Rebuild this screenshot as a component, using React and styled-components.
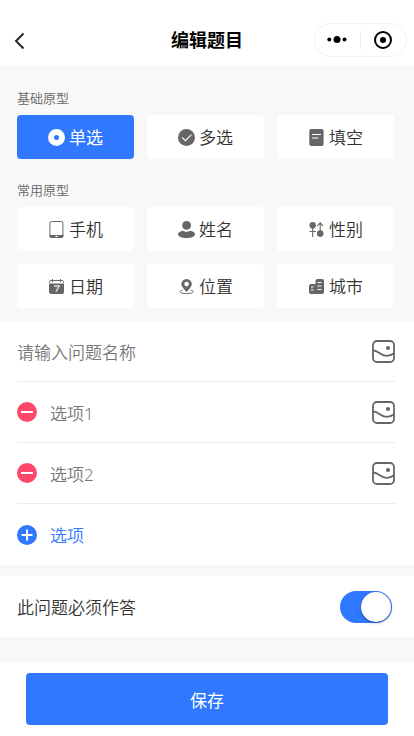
import React, { useState } from 'react'
import styled, { createGlobalStyle } from 'styled-components'

const GlobalStyle = createGlobalStyle`
  * {
    box-sizing: border-box;
  }

  body {
    margin: 0;
    background: #f8f8f8;
    font-family: 'Noto Sans', 'Noto Sans CJK SC', sans-serif;
    font-weight: 350;
    color: #333;
  }

  button {
    border: 0;
    padding: 0;
    margin: 0;
    background: none;
    font-family: inherit;
    font-weight: inherit;
    cursor: pointer;
  }

  svg {
    display: block;
    flex-shrink: 0;
  }
`

const Page = styled.div`
  width: 100%;
  height: 736px;
  display: flex;
  flex-direction: column;
  overflow: hidden;
`

const Header = styled.header`
  height: 66px;
  flex-shrink: 0;
  padding: 14px 7px 0 12px;
  background: #fff;
  display: grid;
  grid-template-columns: 88px 1fr 93px;
  align-items: center;
`

const BackButton = styled.button`
  padding-top: 2px;
`

const PageTitle = styled.h1`
  margin: 0 0 1px;
  font-size: 18px;
  line-height: 26px;
  font-weight: 700;
  text-align: center;
  color: #000;
`

const Capsule = styled.div`
  height: 34px;
  border: 1px solid #f0f0f0;
  border-radius: 17px;
  display: flex;
  align-items: center;
`

const CapsuleButton = styled.button`
  flex: 1;
  padding-right: 2px;
  display: flex;
  justify-content: center;

  & + & {
    border-left: 1px solid #f0f0f0;
  }
`

const Types = styled.section`
  flex-shrink: 0;
  height: 255px;
  padding: 22px 20px 0 17px;
`

const TypeLabel = styled.h2`
  margin: 0;
  height: 20px;
  font-size: 13px;
  line-height: 20px;
  font-weight: 350;
  color: #666;
`

const TypeGrid = styled.div`
  display: grid;
  grid-template-columns: repeat(3, 117px);
  gap: 13px;
  margin: 7px 0 21px;
`

const TypeButton = styled.button`
  height: 44px;
  border-radius: 4px;
  display: flex;
  align-items: center;
  justify-content: center;
  gap: 4px;
  font-size: 17px;
  line-height: 24px;
  color: ${(props) => (props.$active ? '#fff' : '#333')};
  font-weight: ${(props) => (props.$active ? 400 : 350)};
  background: ${(props) => (props.$active ? '#3078ff' : '#fff')};

  svg {
    color: ${(props) => (props.$active ? '#fff' : '#666')};
  }

  span {
    padding-top: 2px;
  }
`

const Panel = styled.section`
  flex-shrink: 0;
  padding: 0 19px 0 17px;
  background: #fff;
`

const Row = styled.div`
  height: 61px;
  display: flex;
  align-items: center;
  gap: 13px;
  border-bottom: ${(props) => (props.$last ? '0' : '1px solid #ebebeb')};
`

const RowText = styled.span`
  flex: 1;
  padding-top: 3px;
  font-size: 17px;
  line-height: 24px;
  color: ${(props) => props.$color || '#777'};
`

const RequiredBar = styled.section`
  flex-shrink: 0;
  height: 61px;
  margin: 11px 0 25px;
  padding: 0 22px 0 17px;
  display: flex;
  align-items: center;
  background: #fff;
`

const Switch = styled.button`
  width: 52px;
  height: 32px;
  padding: 1px;
  border-radius: 16px;
  display: flex;
  justify-content: ${(props) => (props.$on ? 'flex-end' : 'flex-start')};
  background: ${(props) => (props.$on ? '#3078ff' : '#ddd')};
`

const Knob = styled.span`
  width: 30px;
  height: 30px;
  border-radius: 50%;
  background: #fff;
  box-shadow: 0 1px 3px rgba(0, 0, 0, 0.4);
`

const Footer = styled.footer`
  flex: 1;
  padding: 11px 26px;
  background: #fff;
`

const SaveButton = styled.button`
  width: 100%;
  height: 52px;
  border-radius: 4px;
  background: #3078ff;
  color: #fff;
  font-size: 17px;
  font-weight: 400;
`

const TypeSvg = ({ children }) => (
  <svg width="17" height="17" viewBox="0 0 17 17" fill="none">
    {children}
  </svg>
)

const RadioIcon = () => (
  <TypeSvg>
    <path
      fill="currentColor"
      fillRule="evenodd"
      d="M8.5 0a8.5 8.5 0 1 0 0 17a8.5 8.5 0 1 0 0-17zM8.5 6a2.5 2.5 0 1 1 0 5a2.5 2.5 0 1 1 0-5z"
    />
  </TypeSvg>
)

const CheckIcon = () => (
  <TypeSvg>
    <circle cx="8.5" cy="8.5" r="8.5" fill="currentColor" />
    <path d="M4 8.3l3.4 3.4 6-6" stroke="#fff" strokeWidth="1.1" />
  </TypeSvg>
)

const BlankIcon = () => (
  <TypeSvg>
    <rect x="1.3" width="14.3" height="17" rx="2" fill="currentColor" />
    <path d="M4 5.5h9M4 9h6.5" stroke="#fff" strokeWidth="1.2" />
  </TypeSvg>
)

const PhoneIcon = () => (
  <TypeSvg>
    <rect x="1.9" y="0.5" width="13" height="16" rx="1.6" stroke="currentColor" strokeWidth="1" />
    <path d="M1.5 14h14v1.1a1.8 1.8 0 0 1-1.8 1.8H3.3a1.8 1.8 0 0 1-1.8-1.8z" fill="currentColor" />
    <path d="M7.2 15.4h2.6" stroke="#fff" strokeWidth="1" />
  </TypeSvg>
)

const PersonIcon = () => (
  <TypeSvg>
    <circle cx="8.6" cy="4.4" r="4.4" fill="currentColor" />
    <path
      d="M5.2 9.7c1 .7 2 1.1 3.4 1.1s2.4-.4 3.4-1.1c3 .5 5 1.9 5 3.5 0 2.2-3.8 3.8-8.5 3.8S0 15.4 0 13.2c0-1.6 2.2-3 5.2-3.5z"
      fill="currentColor"
    />
  </TypeSvg>
)

const GenderIcon = () => (
  <TypeSvg>
    <circle cx="4.7" cy="4.2" r="3.2" fill="currentColor" />
    <circle cx="12.2" cy="12.6" r="3.3" fill="currentColor" />
    <path
      d="M4.7 7v9M1.5 10.5h6.4M12.2 10V2.2M9.3 4.8l2.9-3 2.9 3"
      stroke="currentColor"
      strokeWidth="1.1"
    />
  </TypeSvg>
)

const DateIcon = () => (
  <TypeSvg>
    <path d="M1 5.5h15V14a2 2 0 0 1-2 2H3a2 2 0 0 1-2-2z" fill="currentColor" />
    <path
      d="M1.5 4.7V3.8a1.3 1.3 0 0 1 1.3-1.3h11.4a1.3 1.3 0 0 1 1.3 1.3v.9M4.5 1v3.2M12.5 1v3.2"
      stroke="currentColor"
      strokeWidth="1"
    />
    <path d="M6 8h5.2L8 13.6" stroke="#ddd" strokeWidth="1.4" />
  </TypeSvg>
)

const PlaceIcon = () => (
  <TypeSvg>
    <path
      fillRule="evenodd"
      d="M8.6.9a5.2 5.2 0 0 0-5.2 5.2c0 3 2.9 5.2 5.2 7.9 2.3-2.7 5.200-4.900 5.200-7.900A5.200 5.200 0 0 0 8.600.900zM8.600 3.800a2.300 2.300 0 1 1 0 4.600a2.300 2.300 0 1 1 0-4.600z"
      fill="currentColor"
    />
    <path
      d="M4.7 12.1c-1.6.3-2.7.8-2.7 1.5 0 1.2 3 2 6.600 2s6.600-.8 6.600-2c0-.7-1.100-1.200-2.700-1.500"
      stroke="currentColor"
      strokeWidth="1"
    />
  </TypeSvg>
)

const CityIcon = () => (
  <TypeSvg>
    <path
      d="M1 8a2 2 0 0 1 2-2h4.5V3a2 2 0 0 1 2-2H14a2 2 0 0 1 2 2v11a2 2 0 0 1-2 2H3a2 2 0 0 1-2-2z"
      fill="currentColor"
    />
    <path d="M9.5 4.5h4M9.5 8h4M9.5 11.5h4M3 9h2.5M3 12h2.5" stroke="#fff" strokeWidth="1" />
  </TypeSvg>
)

const ImageIcon = () => (
  <svg width="23" height="23" viewBox="0 0 23 23" fill="none" stroke="#666">
    <rect x="1" y="1" width="21" height="21" rx="4" strokeWidth="1.8" />
    <path d="M1 10.5c6 0 7.5 5.3 13.5 5.3 3.5 0 5.5-1 7.5-2.6" strokeWidth="1.8" />
    <circle cx="16" cy="8" r="2.1" fill="#666" stroke="none" />
  </svg>
)

const RoundIcon = ({ color, plus }) => (
  <svg width="20" height="20" viewBox="0 0 20 20">
    <circle cx="10" cy="10" r="10" fill={color} />
    <path d={plus ? 'M4.5 10h11M10 4.5v11' : 'M4 10h12'} stroke="#fff" strokeWidth="2" />
  </svg>
)

const basicTypes = [
  { name: '单选', Icon: RadioIcon },
  { name: '多选', Icon: CheckIcon },
  { name: '填空', Icon: BlankIcon },
]

const commonTypes = [
  { name: '手机', Icon: PhoneIcon },
  { name: '姓名', Icon: PersonIcon },
  { name: '性别', Icon: GenderIcon },
  { name: '日期', Icon: DateIcon },
  { name: '位置', Icon: PlaceIcon },
  { name: '城市', Icon: CityIcon },
]

const options = ['选项1', '选项2']

function TypeList({ items, selected, onSelect }) {
  return (
    <TypeGrid>
      {items.map(({ name, Icon }) => (
        <TypeButton key={name} $active={name === selected} onClick={() => onSelect(name)}>
          <Icon />
          <span>{name}</span>
        </TypeButton>
      ))}
    </TypeGrid>
  )
}

function App() {
  const [type, setType] = useState('单选')
  const [required, setRequired] = useState(true)

  return (
    <Page>
      <GlobalStyle />
      <Header>
        <BackButton>
          <svg width="16" height="20" viewBox="0 0 16 20" fill="none">
            <path d="M11.5 2.5L4 10l7.5 7.5" stroke="#222" strokeWidth="1.9" />
          </svg>
        </BackButton>
        <PageTitle>编辑题目</PageTitle>
        <Capsule>
          <CapsuleButton>
            <svg width="20" height="20" viewBox="0 0 20 20">
              <circle cx="2.3" cy="9.5" r="2" />
              <circle cx="10" cy="9.5" r="3.5" />
              <circle cx="17.5" cy="9.5" r="2" />
            </svg>
          </CapsuleButton>
          <CapsuleButton>
            <svg width="20" height="20" viewBox="0 0 20 20">
              <circle cx="10" cy="10" r="8" fill="none" stroke="#000" strokeWidth="2" />
              <circle cx="10" cy="10" r="3" />
            </svg>
          </CapsuleButton>
        </Capsule>
      </Header>

      <Types>
        <TypeLabel>基础原型</TypeLabel>
        <TypeList items={basicTypes} selected={type} onSelect={setType} />
        <TypeLabel>常用原型</TypeLabel>
        <TypeList items={commonTypes} selected={type} onSelect={setType} />
      </Types>

      <Panel>
        <Row>
          <RowText>请输入问题名称</RowText>
          <ImageIcon />
        </Row>
        {options.map((option) => (
          <Row key={option}>
            <RoundIcon color="#ff476c" />
            <RowText>{option}</RowText>
            <ImageIcon />
          </Row>
        ))}
        <Row $last>
          <RoundIcon color="#3078ff" plus />
          <RowText $color="#3078ff">选项</RowText>
        </Row>
      </Panel>

      <RequiredBar>
        <RowText $color="#333">此问题必须作答</RowText>
        <Switch $on={required} onClick={() => setRequired(!required)}>
          <Knob />
        </Switch>
      </RequiredBar>

      <Footer>
        <SaveButton>保存</SaveButton>
      </Footer>
    </Page>
  )
}

export default App
